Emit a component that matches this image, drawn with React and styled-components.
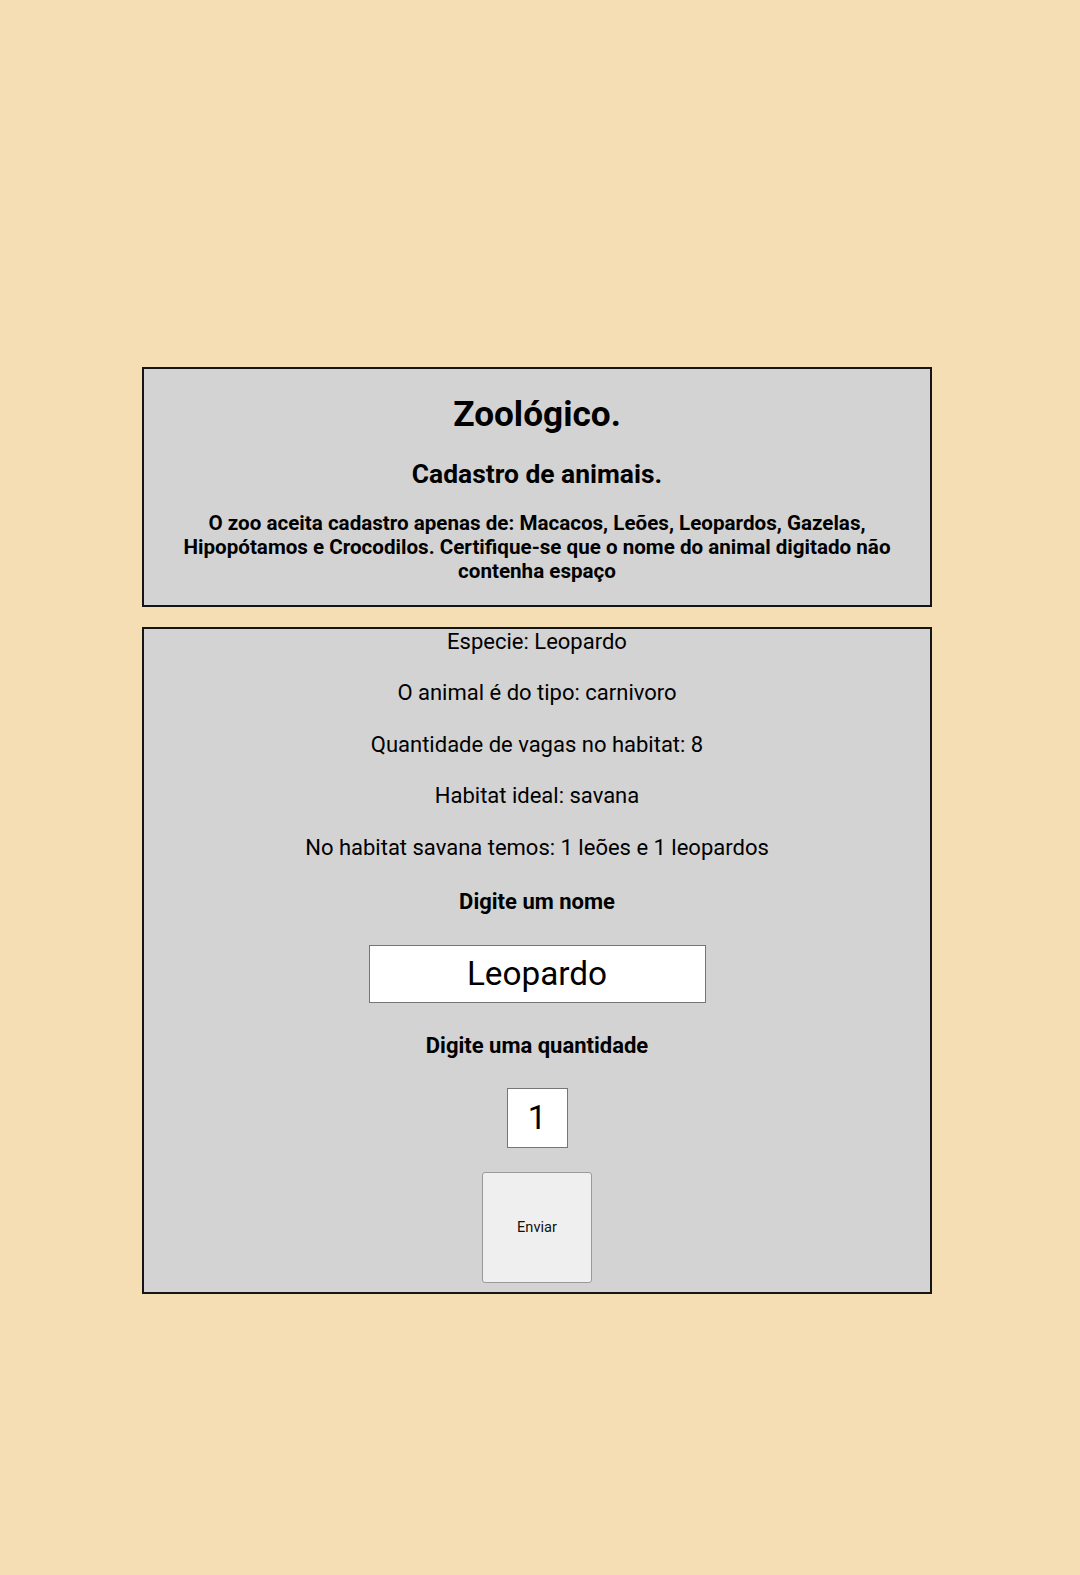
import React from 'react';
import styled, { createGlobalStyle } from 'styled-components';

const GlobalStyle = createGlobalStyle`
  html, body {
    margin: 0;
    padding: 0;
    background: #f5deb3;
  }
  body {
    font-family: Roboto, "Liberation Sans", sans-serif;
    color: #000;
  }
`;

const StyledPage = styled.div`
  min-height: 1575px;
  padding: 367px 6px 0 0;
  box-sizing: border-box;
  display: flex;
  flex-direction: column;
  align-items: center;
  gap: 20px;
`;

const StyledCard = styled.section`
  width: 790px;
  box-sizing: border-box;
  background: #d3d3d3;
  border: 2px solid #151515;
  text-align: center;
  display: flex;
  flex-direction: column;
  align-items: center;
  padding: ${(p) => p.$padding};
`;

const StyledTitle = styled.h1`
  font-size: 35.2px;
  line-height: 38px;
  font-weight: 700;
  margin: 0;
`;

const StyledSubtitle = styled.h2`
  font-size: 26.4px;
  line-height: 28px;
  font-weight: 700;
  margin: 27px 0 0;
`;

const StyledNotice = styled.h3`
  font-size: 20.6px;
  line-height: 24.2px;
  font-weight: 700;
  margin: 23px 0 0;
  padding: 0 30px;
`;

const StyledInfo = styled.p`
  font-size: 22px;
  line-height: 26px;
  margin: ${(p) => (p.$first ? '0' : '25.5px')} 0 0;
`;

const StyledLabel = styled.label`
  display: block;
  font-size: 22px;
  line-height: 26px;
  font-weight: 700;
  margin-top: ${(p) => p.$top}px;
`;

const StyledInput = styled.input`
  box-sizing: border-box;
  width: ${(p) => p.$width}px;
  height: ${(p) => p.$height}px;
  margin-top: ${(p) => p.$top}px;
  border: 1px solid #767676;
  background: #fff;
  font-family: Roboto, "Liberation Sans", sans-serif;
  font-size: 33.3px;
  color: #000;
  text-align: center;
  padding: 0;
  outline: none;
`;

const StyledButton = styled.button`
  box-sizing: border-box;
  width: 110px;
  height: 111px;
  margin-top: 24px;
  background: #efefef;
  border: 1px solid #9a9a9a;
  border-radius: 3px;
  font-family: Roboto, "Liberation Sans", sans-serif;
  font-size: 14.6px;
  color: #111;
  cursor: pointer;
`;

const App = () => (
  <>
    <GlobalStyle />
    <StyledPage>
      <StyledCard $padding="26px 0 21px">
        <StyledTitle>Zoológico.</StyledTitle>
        <StyledSubtitle>Cadastro de animais.</StyledSubtitle>
        <StyledNotice>
          O zoo aceita cadastro apenas de: Macacos, Leões, Leopardos, Gazelas,
          Hipopótamos e Crocodilos. Certifique-se que o nome do animal digitado
          não contenha espaço
        </StyledNotice>
      </StyledCard>
      <StyledCard $padding="0 0 9px">
        <StyledInfo $first>Especie: Leopardo</StyledInfo>
        <StyledInfo>O animal é do tipo: carnivoro</StyledInfo>
        <StyledInfo>Quantidade de vagas no habitat: 8</StyledInfo>
        <StyledInfo>Habitat ideal: savana</StyledInfo>
        <StyledInfo>No habitat savana temos: 1 leões e 1 leopardos</StyledInfo>
        <StyledLabel $top={28} htmlFor="nome">Digite um nome</StyledLabel>
        <StyledInput id="nome" $width={337} $height={58} $top={30} defaultValue="Leopardo" />
        <StyledLabel $top={30} htmlFor="qtd">Digite uma quantidade</StyledLabel>
        <StyledInput id="qtd" $width={61} $height={60} $top={29} defaultValue="1" />
        <StyledButton>Enviar</StyledButton>
      </StyledCard>
    </StyledPage>
  </>
);

export default App;
